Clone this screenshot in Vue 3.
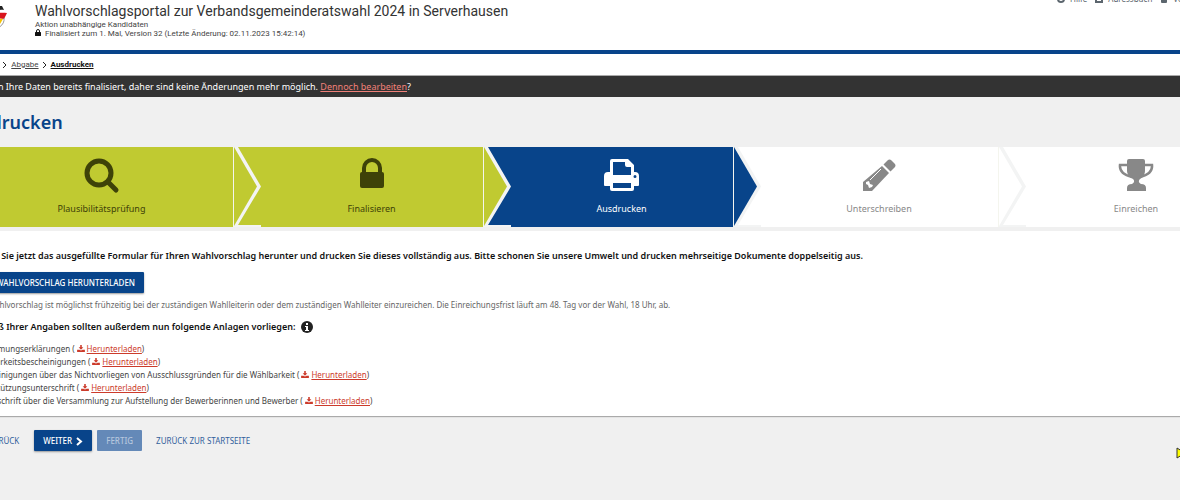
<script setup>
const steps = [
  { label: 'Plausibilitätsprüfung', icon: 'search', state: 'done' },
  { label: 'Finalisieren', icon: 'lock', state: 'done' },
  { label: 'Ausdrucken', icon: 'print', state: 'active' },
  { label: 'Unterschreiben', icon: 'pencil', state: 'open' },
  { label: 'Einreichen', icon: 'trophy', state: 'open' },
]
const downloads = [
  'Zustimmungserklärungen',
  'Wählbarkeitsbescheinigungen',
  'Bescheinigungen über das Nichtvorliegen von Ausschlussgründen für die Wählbarkeit',
  'Unterstützungsunterschrift',
  'Niederschrift über die Versammlung zur Aufstellung der Bewerberinnen und Bewerber',
]
</script>

<template>
  <div class="viewport">
    <div class="page">
      <header class="header">
        <svg class="logo" viewBox="0 0 40 32" aria-hidden="true">
          <path d="M4 16 C12 8 24 2 34 2 L36 6 C26 5 14 10 6 20Z" fill="#222" />
          <path d="M5 20 C14 11 26 8 39 9 L36 15 C26 13 14 16 8 23Z" fill="#d8141c" />
          <path d="M9 23 C16 17 26 14 35 15 L32 20 C26 18 18 20 13 25Z" fill="#f5c400" />
          <path d="M36 14 C37 21 30 26 18 27" fill="none" stroke="#999" stroke-width="1" />
        </svg>
        <div class="titles">
          <h1>Wahlvorschlagsportal zur Verbandsgemeinderatswahl 2024 in Serverhausen</h1>
          <p>Aktion unabhängige Kandidaten</p>
          <p>
            <svg class="mini-lock" viewBox="0 0 12 14" aria-hidden="true">
              <path d="M3 7V4a3 3 0 0 1 6 0v3" fill="none" stroke="#111" stroke-width="2" />
              <rect x="0" y="6" width="12" height="8" rx="1" fill="#111" />
            </svg>
            Finalisiert zum 1. Mal, Version 32 (Letzte Änderung: 02.11.2023 15:42:14)
          </p>
        </div>
        <nav class="tools" aria-label="Werkzeuge">
          <a href="#"><svg viewBox="0 0 8 8"><circle cx="4" cy="4" r="3" fill="none" stroke="#5c666e" stroke-width="2" /></svg>Hilfe</a>
          <a href="#"><svg viewBox="0 0 8 8"><rect x="1" y="1" width="6" height="6" fill="none" stroke="#5c666e" stroke-width="2" /></svg>Adressbuch</a>
          <a href="#"><svg viewBox="0 0 8 8"><rect x="1" y="0" width="6" height="8" rx="1" fill="#5c666e" /></svg>Vorschlag</a>
        </nav>
      </header>

      <nav class="crumbs" aria-label="Brotkrumen">
        <a href="#">Start</a>
        <svg viewBox="0 0 6 8"><path d="M1 1l3 3-3 3" /></svg>
        <a href="#">Abgabe</a>
        <svg viewBox="0 0 6 8"><path d="M1 1l3 3-3 3" /></svg>
        <a href="#" class="current" aria-current="page">Ausdrucken</a>
      </nav>

      <div class="notice">
        Sie haben Ihre Daten bereits finalisiert, daher sind keine Änderungen mehr möglich.
        <a href="#">Dennoch bearbeiten</a>?
      </div>

      <h2>Ausdrucken</h2>

      <ol class="steps">
        <li v-for="(s, i) in steps" :key="s.label" :class="['step', s.state]">
          <svg v-if="s.icon === 'search'" class="icon" viewBox="0 0 36 36">
            <circle cx="15" cy="15" r="12" fill="none" stroke="currentColor" stroke-width="5" />
            <path d="M24 24l8 8" stroke="currentColor" stroke-width="5" stroke-linecap="round" />
          </svg>
          <svg v-else-if="s.icon === 'lock'" class="icon" viewBox="0 0 36 36">
            <path d="M10 15v-5a8 8 0 0 1 16 0v5" fill="none" stroke="currentColor" stroke-width="4" />
            <rect x="6" y="14" width="24" height="16" rx="2" fill="currentColor" />
          </svg>
          <svg v-else-if="s.icon === 'print'" class="icon" viewBox="0 0 36 36">
            <path fill="currentColor" fill-rule="evenodd" d="M6 3a2 2 0 0 1 2-2h16l6 6v7h1a4 4 0 0 1 4 4v9a1 1 0 0 1-1 1h-4v3a2 2 0 0 1-2 2H8a2 2 0 0 1-2-2v-3H1a1 1 0 0 1-1-1v-9a4 4 0 0 1 4-4h2zM9 4v13h18V9h-4a2 2 0 0 1-2-2V4zM9 25v5h18v-5zM31 17a1.500 1.500 0 1 0 0 3a1.500 1.500 0 1 0 0-3z" />
          </svg>
          <svg v-else-if="s.icon === 'pencil'" class="icon" viewBox="0 0 36 36">
            <path d="M21 8l7 7L11 33H2v-9z" fill="currentColor" />
            <path d="M22.500 6.500l4-4q2-2 4 0l3 3q2 2 0 4l-4 4z" fill="currentColor" />
            <path d="M9 22L20 11" stroke="#fff" stroke-width="1" />
            <path d="M5 24l3-1 1 3 3 1-1 2-3 1-1-3-2-1z" fill="#fff" />
          </svg>
          <svg v-else class="icon" viewBox="0 0 36 36">
            <path d="M9 3a2 2 0 0 1 2-2h14a2 2 0 0 1 2 2v10q0 5-5 8c-2 2-1 4 1 5q5 0 5 4v3H9v-3q0-4 5-4c2-1 3-3 1-5q-6-3-6-8z" fill="currentColor" />
            <path d="M11 7H2q-1 9 12 12M26 7h8q1 9-12 12" fill="none" stroke="currentColor" stroke-width="2.500" />
          </svg>
          <span>{{ s.label }}</span>
          <svg v-if="i < steps.length - 1" class="arrow" viewBox="0 0 28 80">
            <path class="edge" d="M0 0H4L27 39.500L4 78H27V80H0Z" />
            <path class="tip" d="M0 0L23 39.500L0 79Z" />
          </svg>
        </li>
      </ol>

      <main class="card">
        <p class="strong">Laden Sie jetzt das ausgefüllte Formular für Ihren Wahlvorschlag herunter und drucken Sie dieses vollständig aus. Bitte schonen Sie unsere Umwelt und drucken mehrseitige Dokumente doppelseitig aus.</p>
        <button type="button" class="btn download">Wahlvorschlag herunterladen</button>
        <p class="hint">Der Wahlvorschlag ist möglichst frühzeitig bei der zuständigen Wahlleiterin oder dem zuständigen Wahlleiter einzureichen. Die Einreichungsfrist läuft am 48. Tag vor der Wahl, 18 Uhr, ab.</p>
        <p class="strong attachments">
          Gemäß Ihrer Angaben sollten außerdem nun folgende Anlagen vorliegen:
          <svg class="info" viewBox="0 0 12 12"><circle cx="6" cy="6" r="6" fill="#222" /><path d="M5 2h2v2H5zM4 5h3v4h1v1H4V9h1V6H4z" fill="#fff" /></svg>
        </p>
        <ul>
          <li v-for="d in downloads" :key="d">{{ d }} (<a href="#"><svg class="dl" viewBox="0 0 10 9"><path d="M4 0h2v3h2L5 6 2 3h2zM0 6h3l2 1 2-1h3v3H0z" /></svg><span>Herunterladen</span></a>)</li>
        </ul>
      </main>

      <footer class="actions">
        <button type="button" class="link back">Zurück</button>
        <button type="button" class="btn next">Weiter
          <svg viewBox="0 0 7 9"><path d="M1 1l4 3.500L1 8" fill="none" stroke="#fff" stroke-width="2" /></svg>
        </button>
        <button type="button" class="btn" disabled>Fertig</button>
        <button type="button" class="link home">Zurück zur Startseite</button>
      </footer>
      <svg class="pointer" viewBox="0 0 12 12" aria-hidden="true"><path d="M1 1L9 6L1 11Z" fill="#ff0" stroke="#333" /></svg>
    </div>
  </div>
</template>

<style>
body { margin: 0; background: #f0f0f0; }
</style>

<style scoped>
.viewport { overflow: hidden; min-height: 100vh; background: #f0f0f0; }
.page {
  position: relative;
  width: calc(100% + 116px);
  margin-left: -48px;
  font: 8px/13px "Noto Sans", Roboto, sans-serif;
  color: #444;
}
h1, h2, p, ol, ul { margin: 0; padding: 0; font-weight: 400; }
ol, ul { list-style: none; }
button { font: inherit; border: 0; background: none; padding: 0; text-transform: uppercase; white-space: nowrap; }
.header { display: flex; height: 50px; padding-left: 16px; border-bottom: 4px solid #08448a; background: #fff; }
.logo { width: 40px; height: 32px; margin: 4px 27px 0 0; }
.titles { padding-top: 3px; font-family: Roboto, "Noto Sans", sans-serif; }
h1 { font-size: 14px; line-height: 17px; color: #333; }
.titles p { line-height: 9px; }
.mini-lock { width: 6px; height: 7px; margin-right: 2px; }
.tools { display: flex; gap: 8px; margin: -8px 68px 0 auto; width: 123px; line-height: 13px; white-space: nowrap; }
.tools a { color: #5c666e; text-decoration: none; }
.tools svg { width: 8px; height: 8px; margin-right: 5px; vertical-align: -1px; }
.crumbs { display: flex; align-items: center; height: 21px; padding-left: 30px; background: #fff; border-bottom: 1px solid #aaa; font-family: Roboto, "Noto Sans", sans-serif; }
.crumbs a { color: #444; }
.crumbs .current { color: #111; font-weight: 700; }
.crumbs svg { width: 6px; height: 8px; margin: 0 3px; fill: none; stroke: #222; }
.notice { padding-left: 10px; line-height: 21px; background: #333; color: #fff; font-size: 9px; }
.notice a { color: #f08078; }
h2 { padding: 12px 6px; font-size: 18px; line-height: 26px; font-weight: 600; color: #08448a; }
.steps { display: grid; grid-template-columns: 282fr 250fr 250fr 265fr 249fr; }
.step { position: relative; display: flex; flex-direction: column; align-items: center; height: 80px; box-sizing: border-box; padding: 11px 0 0 26px; border-right: 1px solid #f4f5ee; font-size: 9px; }
.step:first-child { padding-left: 18px; }
.icon { width: 36px; height: 36px; margin-bottom: 8px; }
.done { background: #c0ca31; color: #3e4208; }
.active { background: #08448a; color: #fff; }
.open { background: #fff; color: #888; }
.arrow { position: absolute; z-index: 1; left: calc(100% + 1px); top: 0; width: 28px; height: 80px; }
.edge { fill: #f3f4f4; }
.done .tip { fill: #c0ca31; }
.active .tip { fill: #08448a; }
.open .tip { fill: #fff; }
.card { margin-top: 4px; padding: 18px 20px 9px; background: #fff; box-shadow: 0 1px 1px #aaa; }
.strong { font-size: 9px; font-weight: 600; color: #111; }
.btn { height: 21px; padding: 0 9px; border-radius: 1px; background: #08448a; color: #fff; box-shadow: 0 1px 2px #999; font-weight: 500; }
.download { display: block; margin: 10px 0 5px; padding-left: 24px; }
.hint { color: #666; }
.attachments { display: flex; align-items: center; gap: 5px; margin: 9px 0; }
.info { width: 12px; height: 12px; }
ul a { color: #cc3b2b; }
.dl { width: 8px; height: 7px; margin: 0 2px; fill: #cc3b2b; }
.actions { display: flex; padding: 14px 20px; }
.actions .btn { margin-right: 5px; }
.btn svg { width: 7px; height: 9px; margin-left: 2px; vertical-align: -2px; }
.btn:disabled { background: #6489b8; color: #b4c6dd; box-shadow: none; }
.link { color: #30609c; }
.back { margin: 0 15px 0 16px; }
.home { margin-left: 9px; }
.pointer { position: absolute; right: 60px; top: 447px; width: 12px; height: 12px; }
</style>
